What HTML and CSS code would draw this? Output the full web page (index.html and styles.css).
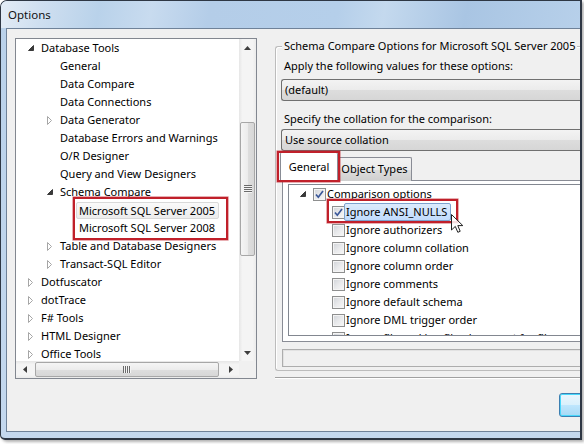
FILE: index.html
```html
<!DOCTYPE html>
<html>
<head>
<meta charset="utf-8">
<title>Options</title>
<link rel="stylesheet" href="styles.css">
</head>
<body>
<div class="window">
  <div class="titlebar">Options</div>
  <div class="client">
    <div class="main">
      <div class="navtree">
        <div class="nav-body">
          <div class="rows">
            <div class="row l0"><span class="exp"><svg width="6" height="6" viewBox="0 0 6 6"><path d="M5.5 0.5 L5.5 5.5 L0.5 5.5 Z" fill="#3a3a3a" stroke="#3a3a3a" stroke-width="1" stroke-linejoin="round"/></svg></span><span class="txt">Database Tools</span></div>
            <div class="row l1"><span class="exp"></span><span class="txt">General</span></div>
            <div class="row l1"><span class="exp"></span><span class="txt">Data Compare</span></div>
            <div class="row l1"><span class="exp"></span><span class="txt">Data Connections</span></div>
            <div class="row l1"><span class="exp"><svg width="6" height="9" viewBox="0 0 6 9"><path d="M0.5 0.5 L4.5 4.5 L0.5 8.5 Z" fill="#fff" stroke="#a6a6a6"/></svg></span><span class="txt">Data Generator</span></div>
            <div class="row l1"><span class="exp"></span><span class="txt">Database Errors and Warnings</span></div>
            <div class="row l1"><span class="exp"></span><span class="txt">O/R Designer</span></div>
            <div class="row l1"><span class="exp"></span><span class="txt">Query and View Designers</span></div>
            <div class="row l1"><span class="exp"><svg width="6" height="6" viewBox="0 0 6 6"><path d="M5.5 0.5 L5.5 5.5 L0.5 5.5 Z" fill="#3a3a3a" stroke="#3a3a3a" stroke-width="1" stroke-linejoin="round"/></svg></span><span class="txt">Schema Compare</span></div>
            <div class="row l2"><span class="exp"></span><span class="txt sel">Microsoft SQL Server 2005</span></div>
            <div class="row l2"><span class="exp"></span><span class="txt">Microsoft SQL Server 2008</span></div>
            <div class="row l1"><span class="exp"><svg width="6" height="9" viewBox="0 0 6 9"><path d="M0.5 0.5 L4.5 4.5 L0.5 8.5 Z" fill="#fff" stroke="#a6a6a6"/></svg></span><span class="txt">Table and Database Designers</span></div>
            <div class="row l1"><span class="exp"><svg width="6" height="9" viewBox="0 0 6 9"><path d="M0.5 0.5 L4.5 4.5 L0.5 8.5 Z" fill="#fff" stroke="#a6a6a6"/></svg></span><span class="txt">Transact-SQL Editor</span></div>
            <div class="row l0"><span class="exp"><svg width="6" height="9" viewBox="0 0 6 9"><path d="M0.5 0.5 L4.5 4.5 L0.5 8.5 Z" fill="#fff" stroke="#a6a6a6"/></svg></span><span class="txt">Dotfuscator</span></div>
            <div class="row l0"><span class="exp"><svg width="6" height="9" viewBox="0 0 6 9"><path d="M0.5 0.5 L4.5 4.5 L0.5 8.5 Z" fill="#fff" stroke="#a6a6a6"/></svg></span><span class="txt">dotTrace</span></div>
            <div class="row l0"><span class="exp"><svg width="6" height="9" viewBox="0 0 6 9"><path d="M0.5 0.5 L4.5 4.5 L0.5 8.5 Z" fill="#fff" stroke="#a6a6a6"/></svg></span><span class="txt">F# Tools</span></div>
            <div class="row l0"><span class="exp"><svg width="6" height="9" viewBox="0 0 6 9"><path d="M0.5 0.5 L4.5 4.5 L0.5 8.5 Z" fill="#fff" stroke="#a6a6a6"/></svg></span><span class="txt">HTML Designer</span></div>
            <div class="row l0"><span class="exp"><svg width="6" height="9" viewBox="0 0 6 9"><path d="M0.5 0.5 L4.5 4.5 L0.5 8.5 Z" fill="#fff" stroke="#a6a6a6"/></svg></span><span class="txt">Office Tools</span></div>
          </div>
          <div class="vscroll">
            <div class="sbtn"><svg width="7" height="4" viewBox="0 0 7 4"><path d="M3.5 0 L7 4 L0 4 Z" fill="#3d3d3d"/></svg></div>
            <div class="vtrack"><div class="vthumb"><span class="vgrip"></span></div></div>
            <div class="sbtn"><svg width="7" height="4" viewBox="0 0 7 4"><path d="M0 0 L7 0 L3.5 4 Z" fill="#3d3d3d"/></svg></div>
          </div>
        </div>
        <div class="hscroll-row">
          <div class="hscroll">
            <div class="sbtn"><svg width="4" height="7" viewBox="0 0 4 7"><path d="M0 3.5 L4 0 L4 7 Z" fill="#3d3d3d"/></svg></div>
            <div class="htrack"><div class="hthumb"><span class="hgrip"></span></div></div>
            <div class="sbtn"><svg width="4" height="7" viewBox="0 0 4 7"><path d="M0 0 L4 3.5 L0 7 Z" fill="#3d3d3d"/></svg></div>
          </div>
          <div class="corner"></div>
        </div>
      </div>

      <div class="page">
        <div class="group">
          <span class="legend">Schema Compare Options for Microsoft SQL Server 2005</span>
          <div class="label first">Apply the following values for these options:</div>
          <div class="combo">(default)</div>
          <div class="label">Specify the collation for the comparison:</div>
          <div class="combo tight">Use source collation</div>
          <div class="tabstrip">
            <div class="tab active">General</div>
            <div class="tab">Object Types</div>
          </div>
          <div class="tabpage">
            <div class="opttree">
              <div class="orow o0"><span class="oexp"><svg width="6" height="6" viewBox="0 0 6 6"><path d="M5.5 0.5 L5.5 5.5 L0.5 5.5 Z" fill="#3a3a3a" stroke="#3a3a3a" stroke-linejoin="round"/></svg></span><span class="cb checked"><svg width="11" height="11" viewBox="0 0 11 11"><path d="M2 5.5 L4.3 8.2 L9 2" fill="none" stroke="#3b5899" stroke-width="1.7"/></svg></span><span class="otxt">Comparison options</span></div>
              <div class="orow o1"><span class="oexp"></span><span class="cb checked"><svg width="11" height="11" viewBox="0 0 11 11"><path d="M2 5.5 L4.3 8.2 L9 2" fill="none" stroke="#3b5899" stroke-width="1.7"/></svg></span><span class="otxt hover">Ignore ANSI_NULLS</span></div>
              <div class="orow o1"><span class="oexp"></span><span class="cb"></span><span class="otxt">Ignore authorizers</span></div>
              <div class="orow o1"><span class="oexp"></span><span class="cb"></span><span class="otxt">Ignore column collation</span></div>
              <div class="orow o1"><span class="oexp"></span><span class="cb"></span><span class="otxt">Ignore column order</span></div>
              <div class="orow o1"><span class="oexp"></span><span class="cb"></span><span class="otxt">Ignore comments</span></div>
              <div class="orow o1"><span class="oexp"></span><span class="cb"></span><span class="otxt">Ignore default schema</span></div>
              <div class="orow o1"><span class="oexp"></span><span class="cb"></span><span class="otxt">Ignore DML trigger order</span></div>
              <div class="orow o1"><span class="oexp"></span><span class="cb"></span><span class="otxt">Ignore file and log file placement for filegroups</span></div>
            </div>
          </div>
          <div class="status"></div>
        </div>
        <div class="separator"></div>
        <div class="btnrow"><div class="button"></div></div>
      </div>
    </div>
  </div>

  <div class="mark mark-tree"></div>
  <div class="mark mark-tab"></div>
  <div class="mark mark-opt"></div>
  <svg class="cursor" width="13" height="20" viewBox="0 0 13 20"><path d="M0.5 0.5 L0.5 16 L4.3 12.4 L6.8 18.3 L9.2 17.3 L6.8 11.6 L11.8 11.6 Z" fill="#fff" fill-opacity="0.85" stroke="#222" stroke-width="1" stroke-linejoin="round"/></svg>
</div>
</body>
</html>
```

FILE: styles.css
```css
* { box-sizing: border-box; }
html, body { margin: 0; padding: 0; background: #ffffff; }
body {
  width: 584px;
  height: 444px;
  overflow: hidden;
  font-family: "Noto Sans", "DejaVu Sans", sans-serif;
  font-size: 11px;
  color: #000;
}

.window {
  position: relative;
  width: 582px;
  height: 440px;
  border: 1px solid #2e3744;
  border-right-width: 2px;
  border-bottom-width: 2px;
  border-radius: 7px 0 0 5px;
  background: linear-gradient(180deg, #b9d1ea 0%, #c4d8ee 100%);
  display: flex;
  flex-direction: column;
  overflow: hidden;
  box-shadow: 2px 2px 3px rgba(0, 0, 0, 0.3);
}

.titlebar {
  height: 27px;
  flex: none;
  padding-left: 7px;
  line-height: 28px;
  font-size: 11.5px;
  color: #111;
  background: linear-gradient(100deg, #e3ecf6 0%, #cfdff0 7%, #b9d2ea 17%, #c8dbef 26%, #b4cde8 36%, #b5cfea 58%, #c4d9ee 66%, #a9c5e3 80%, #b7d0ea 100%);
}

.client {
  height: 404px;
  flex: none;
  margin-left: 5px;
  border: 1px solid #6f8299;
  border-right: 0;
  background: #f0f0f0;
  overflow: hidden;
}

.main {
  display: flex;
  align-items: flex-start;
  padding: 9px 0 0 8px;
  gap: 18px;
}

/* ---------- navigation tree ---------- */
.navtree {
  flex: none;
  width: 242px;
  height: 341px;
  border: 1px solid #828790;
  background: #fff;
  display: flex;
  flex-direction: column;
}
.nav-body { display: flex; height: 322px; }
.rows { flex: 1; overflow: hidden; }
.row {
  height: 18px;
  line-height: 18px;
  display: flex;
  align-items: center;
  white-space: nowrap;
}
.row.l0 { padding-left: 7px; }
.row.l1 { padding-left: 26px; }
.row.l2 { padding-left: 45px; }
.exp {
  width: 18px;
  height: 18px;
  flex: none;
  display: flex;
  align-items: center;
  padding-left: 5px;
}
.txt { height: 18px; line-height: 18px; }
.txt.sel {
  height: 17px;
  line-height: 15px;
  margin-left: -3px;
  padding: 0 3px 0 2px;
  border: 1px solid #d9d9d9;
  border-radius: 2px;
  background: linear-gradient(180deg, #fafafa 0%, #ececec 100%);
}

.vscroll {
  width: 17px;
  flex: none;
  display: flex;
  flex-direction: column;
  background: linear-gradient(90deg, #e6e6e6 0%, #f4f4f4 20%, #f4f4f4 80%, #ebebeb 100%);
}
.sbtn {
  width: 17px;
  height: 17px;
  flex: none;
  display: flex;
  align-items: center;
  justify-content: center;
}
.vtrack { flex: 1; padding-top: 66px; }
.vthumb {
  margin: 0 1px;
  height: 134px;
  border: 1px solid #a7a7a7;
  border-radius: 2px;
  background: linear-gradient(90deg, #f5f5f5 0%, #ececec 50%, #dedede 51%, #d7d7d7 100%);
  display: flex;
  align-items: center;
  justify-content: center;
}
.vgrip {
  width: 8px;
  height: 8px;
  background: repeating-linear-gradient(180deg, #6b6b6b 0 1px, #f4f4f4 1px 2px);
}

.hscroll-row { height: 17px; display: flex; }
.hscroll {
  flex: 1;
  display: flex;
  background: linear-gradient(180deg, #e6e6e6 0%, #f4f4f4 20%, #f4f4f4 80%, #ebebeb 100%);
}
.htrack { flex: 1; padding-left: 2px; padding-top: 1px; }
.hthumb {
  width: 184px;
  height: 15px;
  border: 1px solid #a7a7a7;
  border-radius: 2px;
  background: linear-gradient(180deg, #f5f5f5 0%, #ececec 50%, #dedede 51%, #d7d7d7 100%);
  display: flex;
  align-items: center;
  justify-content: center;
}
.hgrip {
  width: 8px;
  height: 7px;
  background: repeating-linear-gradient(90deg, #6b6b6b 0 1px, #f4f4f4 1px 2px);
}
.corner { width: 17px; background: #f0f0f0; }

/* ---------- right page ---------- */
.page {
  flex: none;
  width: 340px;
  margin-top: 8px;
}
.group {
  position: relative;
  height: 325px;
  border: 1px solid #bcbcbc;
  border-right: 0;
  border-radius: 3px 0 0 3px;
  box-shadow: inset 1px 1px 0 #fff;
  padding-left: 5px;
}
.legend {
  position: absolute;
  left: 6px;
  top: -9px;
  padding: 0 2px;
  line-height: 16px;
  background: #f0f0f0;
  white-space: nowrap;
}
.label {
  height: 18px;
  line-height: 18px;
  padding-left: 3px;
  margin-top: 9px;
  white-space: nowrap;
}
.label.first { margin-top: 10px; }
.combo {
  margin-top: 4px;
  height: 22px;
  line-height: 20px;
  padding-left: 3px;
  border: 1px solid #707070;
  border-right: 0;
  border-radius: 3px 0 0 3px;
  background: linear-gradient(180deg, #f3f3f3 0%, #ebebeb 50%, #dddddd 51%, #d6d6d6 100%);
  white-space: nowrap;
}
.combo.tight { margin-top: 1px; }

.tabstrip {
  position: relative;
  z-index: 1;
  height: 30px;
  margin-bottom: -1px;
  display: flex;
  align-items: flex-end;
  margin-left: -1px;
}
.tab {
  height: 24px;
  width: 75px;
  line-height: 22px;
  text-align: center;
  border: 1px solid #898c95;
  border-bottom: 0;
  border-radius: 2px 2px 0 0;
  background: linear-gradient(180deg, #f2f2f2 0%, #ebebeb 50%, #dddddd 51%, #cfcfcf 100%);
  margin-left: -1px;
}
.tab.active {
  width: 58px;
  height: 29px;
  line-height: 27px;
  margin-left: 0;
  background: #ffffff;
  position: relative;
  z-index: 2;
}
.tabpage {
  margin-left: 1px;
  height: 162px;
  border: 1px solid #898c95;
  border-right: 0;
  background: #ffffff;
  padding: 3px 0 5px 5px;
}
.opttree {
  height: 152px;
  border: 1px solid #828790;
  border-right: 0;
  background: #fff;
  overflow: hidden;
}
.orow {
  height: 18px;
  display: flex;
  align-items: center;
  white-space: nowrap;
}
.orow.o0 { padding-left: 8px; }
.orow.o1 { padding-left: 27px; }
.oexp {
  width: 16px;
  height: 18px;
  flex: none;
  display: flex;
  align-items: center;
  padding-left: 3px;
}
.cb {
  width: 13px;
  height: 13px;
  flex: none;
  border: 1px solid #8e8f8f;
  background: linear-gradient(135deg, #d0d3d8 0%, #e8e9eb 50%, #f8f8f8 100%);
  box-shadow: inset 0 0 0 1px #f4f4f4;
  display: flex;
  align-items: center;
  justify-content: center;
}
.cb.checked svg { display: block; }
.otxt { margin-left: 1px; line-height: 18px; height: 18px; }
.otxt.hover {
  margin-left: -1px;
  height: 18px;
  line-height: 16px;
  padding: 0 3px 0 1px;
  border: 1px solid #7da2ce;
  border-radius: 2px;
  background: linear-gradient(180deg, #dcebfc 0%, #c1dbfc 100%);
}
.status {
  margin-top: 7px;
  margin-left: 1px;
  height: 18px;
  border: 1px solid #adadad;
  border-right: 0;
  background: #f0f0f0;
  box-shadow: inset 1px 1px 0 #e2e2e2;
}
.separator {
  margin-top: 6px;
  height: 2px;
  border-top: 1px solid #a0a0a0;
  border-bottom: 1px solid #ffffff;
}
.btnrow { padding: 14px 0 0 284px; }
.button {
  width: 75px;
  height: 24px;
  border: 1px solid #3c7fb1;
  border-radius: 3px;
  background: linear-gradient(180deg, #eaf6fd 0%, #d9f0fc 50%, #bee6fd 51%, #a7d9f5 100%);
  box-shadow: inset 0 0 0 1px #48d8fb;
}

/* ---------- annotations ---------- */
.mark {
  position: absolute;
  border: 2px solid #c0202a;
  box-shadow: 0 0 0 0.6px rgba(192, 32, 42, 0.6);
  z-index: 5;
}
.mark-tree { left: 72px; top: 196px; width: 155px; height: 43px; }
.mark-tab { left: 276px; top: 150px; width: 63px; height: 31px; }
.mark-opt { left: 326px; top: 198px; width: 131px; height: 24px; }
.cursor { position: absolute; left: 450px; top: 213px; z-index: 6; }
```
